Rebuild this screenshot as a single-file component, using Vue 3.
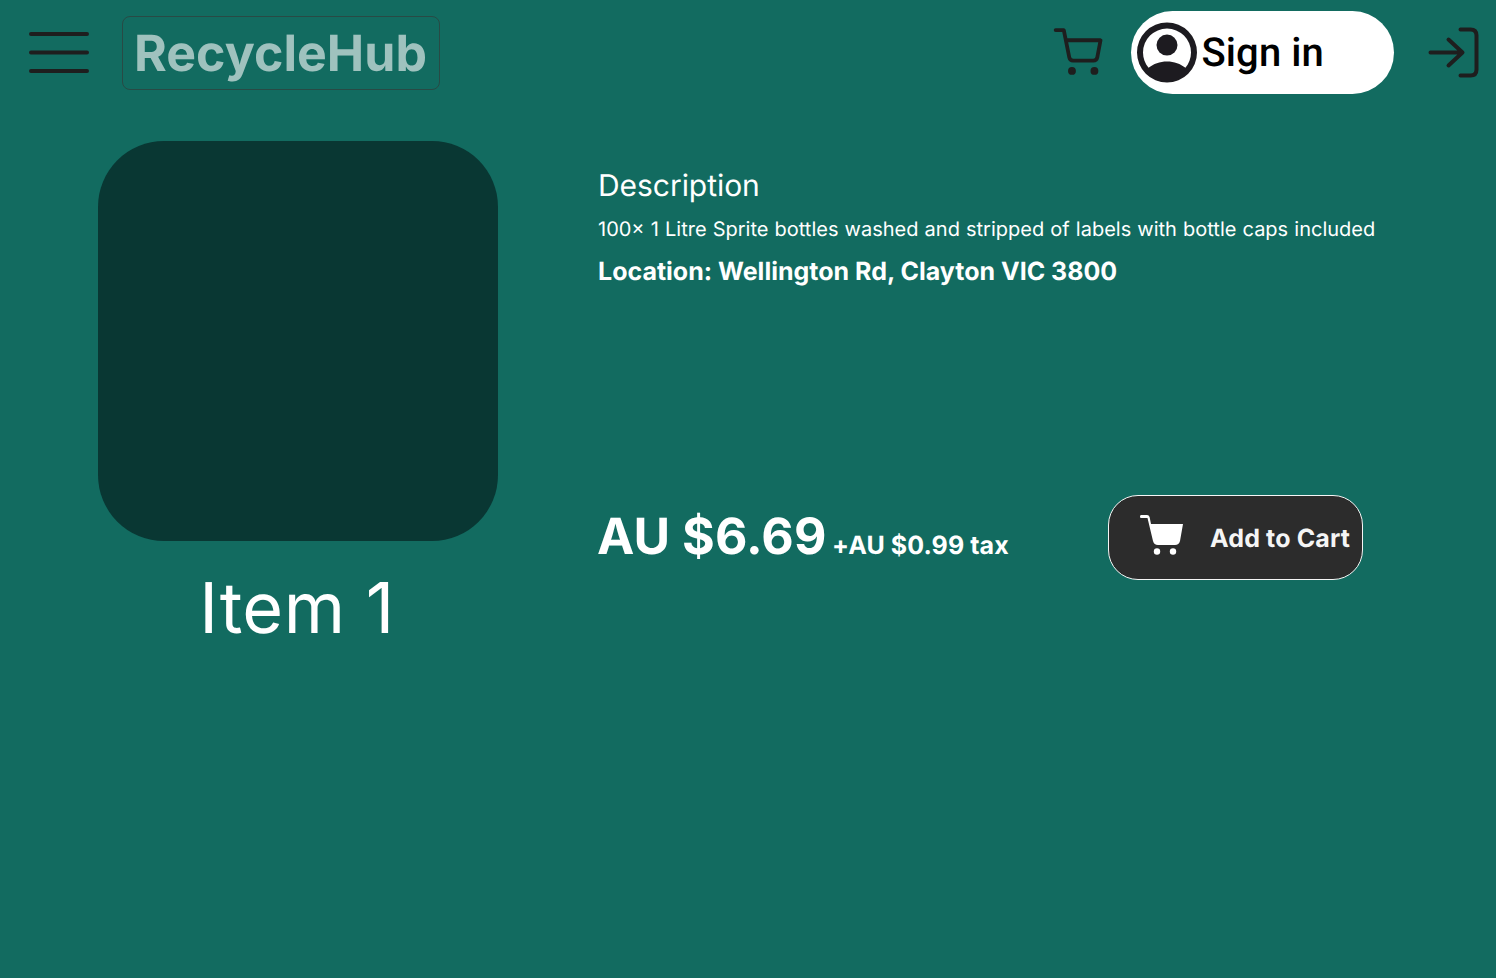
<script setup>
const product = {
  name: 'Item 1',
  description: '100× 1 Litre Sprite bottles washed and stripped of labels with bottle caps included',
  location: 'Location: Wellington Rd, Clayton VIC 3800',
  price: 'AU $6.69',
  tax: '+AU $0.99 tax',
}
</script>

<template>
  <div class="page">
    <header class="bar">
      <svg class="menu" width="60" height="42" viewBox="0 0 60 42">
        <path d="M2 2H58M2 20.5H58M2 39H58" />
      </svg>
      <div class="brand"><span>RecycleHub</span></div>
      <svg class="cart" width="49" height="49" viewBox="0.200 0 24 24">
        <path d="M1 1h4l2.68 13.39a2 2 0 0 0 2 1.61h9.72a2 2 0 0 0 2-1.61L23 6H6" />
        <circle cx="9" cy="21" r="1" />
        <circle cx="20" cy="21" r="1" />
      </svg>
      <button class="signin">
        <svg width="60" height="60" viewBox="2 2.150 20 20">
          <path fill-rule="evenodd" d="M12 2a10 10 0 1 0 0 20a10 10 0 0 0 0-20zM5.85 17.1C4.7 15.7 4 13.9 4 12a8 8 0 0 1 16 0c0 1.900-.7 3.700-1.850 5.100C16.500 15.800 14.400 15 12 15s-4.500.8-6.150 2.100z" />
          <circle cx="12" cy="9.5" r="3.5" />
        </svg>
        <span>Sign in</span>
      </button>
      <svg class="login" width="51" height="51" viewBox="-0.500 -0.500 51 51">
        <path d="M32 2H42Q48 2 48 8V42Q48 48 42 48H32M2 25H34M20 12L34 25L20 38" />
      </svg>
    </header>
    <main class="product">
      <section class="visual">
        <div class="photo"></div>
        <h1>{{ product.name }}</h1>
      </section>
      <section class="info">
        <h2>Description</h2>
        <p class="text">{{ product.description }}</p>
        <p class="place">{{ product.location }}</p>
        <div class="buy">
          <div class="price"><strong>{{ product.price }}</strong><span>{{ product.tax }}</span></div>
          <button class="add">
            <svg width="44" height="41" viewBox="0 0 44 41">
              <path d="M1 0H7Q9 0 9.600 2L11 9H43L40 26Q39 30 35 30H18Q14 30 13 26L7.500 3H1Q0 3 0 1.500Q0 0 1 0Z" />
              <circle cx="17" cy="36.500" r="3.200" />
              <circle cx="33" cy="36.500" r="3.200" />
            </svg>
            <span>Add to Cart</span>
          </button>
        </div>
      </section>
    </main>
  </div>
</template>

<style>
body { background: #126b60; }
</style>

<style scoped>
.page {
  box-sizing: border-box;
  width: 1496px;
  height: 978px;
  background: #126b60;
  font-family: Inter, "Liberation Sans", sans-serif;
  text-rendering: geometricPrecision;
  color: #fff;
  overflow: hidden;
}
h1, h2, p { margin: 0; font-weight: 400; white-space: nowrap; }
button { font: inherit; border: 0; padding: 0; text-rendering: inherit; }
.bar {
  display: flex;
  align-items: center;
  box-sizing: border-box;
  height: 105px;
  padding: 0 17px 0 29px;
}
.bar > * { flex: none; }
svg { display: block; overflow: visible; }
.menu, .cart, .login {
  fill: none;
  stroke: #1e1e1e;
  stroke-width: 4;
  stroke-linecap: round;
  stroke-linejoin: round;
}
.brand {
  display: flex;
  align-items: center;
  box-sizing: border-box;
  width: 318px;
  height: 74px;
  margin: 1px 0 0 33px;
  padding: 2px 0 0 11px;
  border: 1px solid #284a45;
  border-radius: 8px;
  font-size: 50px;
  font-weight: 700;
  line-height: 70px;
  letter-spacing: 0.05px;
  color: #9fc2be;
}
.cart { margin: 0 1px 0 auto; stroke-width: 1.85; }
.signin {
  display: flex;
  align-items: center;
  width: 263px;
  height: 83px;
  margin: 0 34px 0 27px;
  padding-left: 6px;
  box-sizing: border-box;
  border-radius: 42px;
  background: #fff;
  font: 500 40px/48px Roboto, sans-serif;
  color: #000;
  fill: #1d1b20;
}
.signin span { margin: 0 0 0 4.500px; letter-spacing: 0.1px; }
.product { display: flex; padding: 36px 0 0 98px; }
.visual { width: 400px; }
.photo { height: 400px; border-radius: 66px; background: #093733; }
h1 {
  margin-top: 23px;
  padding-right: 2px;
  font-size: 70px;
  line-height: 88px;
  letter-spacing: 0.500px;
  text-align: center;
}
.info { width: 800px; margin-left: 100px; padding-top: 26px; }
h2 { font-size: 30px; line-height: 38px; letter-spacing: -0.05px; }
.text { margin-top: 11px; font-size: 20px; line-height: 26px; word-spacing: 0.500px; }
.place { margin-top: 14px; font-size: 25px; line-height: 32px; font-weight: 700; }
.buy { display: flex; margin-top: 207px; height: 85px; }
.price {
  display: flex;
  align-items: baseline;
  box-sizing: border-box;
  width: 511px;
  margin-left: -1px;
  padding-top: 10px;
  white-space: nowrap;
}
.price strong { font-size: 50px; line-height: 64px; letter-spacing: 0.1px; }
.price span { margin-left: 5.500px; font-size: 25px; font-weight: 700; letter-spacing: 0.08px; }
.add {
  display: flex;
  align-items: center;
  box-sizing: border-box;
  width: 255px;
  height: 85px;
  padding-left: 31px;
  border: 1px solid #f5f5f5;
  border-radius: 30px;
  background: #2c2c2c;
  color: #f5f5f5;
  fill: #fff;
  font-size: 25px;
  font-weight: 700;
}
.add svg { margin-top: -4px; }
.add span { margin: 2px 0 0 26px; letter-spacing: 0.14px; white-space: nowrap; }
</style>
